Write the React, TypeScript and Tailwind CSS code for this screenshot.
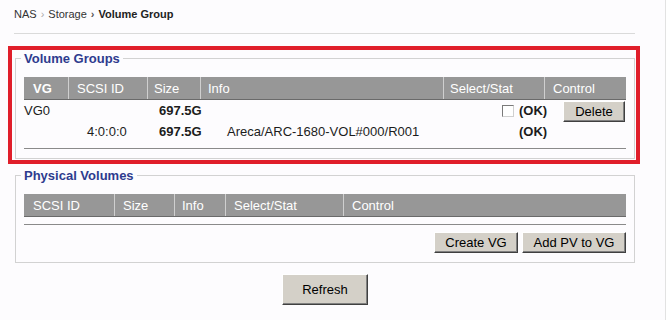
import React from "react";

interface Column {
  label: string;
  width: string;
  bold?: boolean;
}

const vgColumns: Column[] = [
  { label: "VG", width: "w-[44px] pl-[9px]", bold: true },
  { label: "SCSI ID", width: "w-[79px] pl-[8px] border-l" },
  { label: "Size", width: "w-[53px] pl-[6px] border-l" },
  { label: "Info", width: "w-[243px] pl-[7px] border-l" },
  { label: "Select/Stat", width: "w-[101px] pl-[6px] border-l" },
  { label: "Control", width: "w-[81px] pl-[8px] border-l" },
];

const pvColumns: Column[] = [
  { label: "SCSI ID", width: "w-[90px] pl-[9px]" },
  { label: "Size", width: "w-[60px] pl-[8px] border-l" },
  { label: "Info", width: "w-[51px] pl-[7px] border-l" },
  { label: "Select/Stat", width: "w-[118px] pl-[8px] border-l" },
  { label: "Control", width: "w-[282px] pl-[8px] border-l" },
];

const btn =
  "bg-[#d4d0c8] border-t border-l border-r border-b border-t-white border-l-white border-r-[#404040] border-b-[#404040] shadow-[inset_-1px_-1px_0_#808080] text-[13px] leading-none text-black";

const HeaderRow: React.FC<{ columns: Column[] }> = ({ columns }) => (
  <div className="flex h-[23px] bg-[#979797] border-b border-[#6a6a6a] text-[13px] text-white">
    {columns.map((c) => (
      <div
        key={c.label}
        className={`${c.width} flex items-center pt-[1px] border-[#cfcfcf] ${
          c.bold ? "font-bold" : ""
        }`}
      >
        {c.label}
      </div>
    ))}
  </div>
);

const Panel: React.FC<{ title: string; children: React.ReactNode }> = ({
  title,
  children,
}) => (
  <fieldset className="w-[620px] border border-[#d2d2d2] px-[8px] pb-[9px] pt-[11px]">
    <legend className="-ml-[3px] px-[3px] text-[13px] font-bold leading-[15px] text-[#2e3b8e]">
      {title}
    </legend>
    {children}
  </fieldset>
);

export default function App() {
  return (
    <div className="min-h-[320px] w-[666px] border-r border-[#e2e2e2] bg-[#fdfcfe] font-['Liberation_Sans',Arial,sans-serif] text-[#1c1c1c]">
      <div className="pl-[14px] pt-[8px]">
        <div className="flex h-[13px] items-center gap-[4px] text-[11px] leading-[13px] text-[#333]">
          <span>NAS</span>
          <span className="text-[#aaa]">›</span>
          <span>Storage</span>
          <span className="font-bold text-[#555]">›</span>
          <span className="font-bold text-[#222]">Volume Group</span>
        </div>
        <div className="mt-[12px] h-px w-[621px] bg-[#dadada]" />
      </div>

      <div className="ml-[8px] mt-[12px] h-[118px] w-[632px] border-4 border-[#e01e2a] pl-[3px] pt-[1px]">
        <Panel title="Volume Groups">
          <HeaderRow columns={vgColumns} />
          <div className="flex h-[22px] items-center text-[13px]">
            <span className="w-[63px]">VG0</span>
            <span className="w-[72px]" />
            <span className="w-[68px] font-bold">697.5G</span>
            <span className="w-[275px]" />
            <span className="flex w-[61px] items-center gap-[5px]">
              <span className="h-[12px] w-[12px] border border-[#7a7a7a] border-b-[#d0d0d0] border-r-[#d0d0d0] bg-white" />
              <span className="font-bold">(OK)</span>
            </span>
            <button className={`${btn} h-[21px] w-[62px] mt-[1px]`}>Delete</button>
          </div>
          <div className="flex h-[20px] items-center text-[13px]">
            <span className="w-[63px]" />
            <span className="w-[72px]">4:0:0:0</span>
            <span className="w-[68px] font-bold">697.5G</span>
            <span className="w-[275px]">Areca/ARC-1680-VOL#000/R001</span>
            <span className="w-[61px] pl-[17px] font-bold">(OK)</span>
          </div>
          <div className="mt-[6px] h-px bg-[#8a8a8a]" />
        </Panel>
      </div>

      <div className="ml-[15px] mt-[4px]">
        <Panel title="Physical Volumes">
          <HeaderRow columns={pvColumns} />
          <div className="mt-[7px] h-px bg-[#8a8a8a]" />
          <div className="mt-[7px] flex justify-end gap-[4px]">
            <button className={`${btn} h-[21px] w-[84px]`}>Create VG</button>
            <button className={`${btn} h-[21px] w-[104px]`}>Add PV to VG</button>
          </div>
        </Panel>
      </div>

      <div className="ml-[15px] mt-[11px] flex w-[620px] justify-center">
        <button className={`${btn} h-[31px] w-[86px]`}>Refresh</button>
      </div>
    </div>
  );
}
